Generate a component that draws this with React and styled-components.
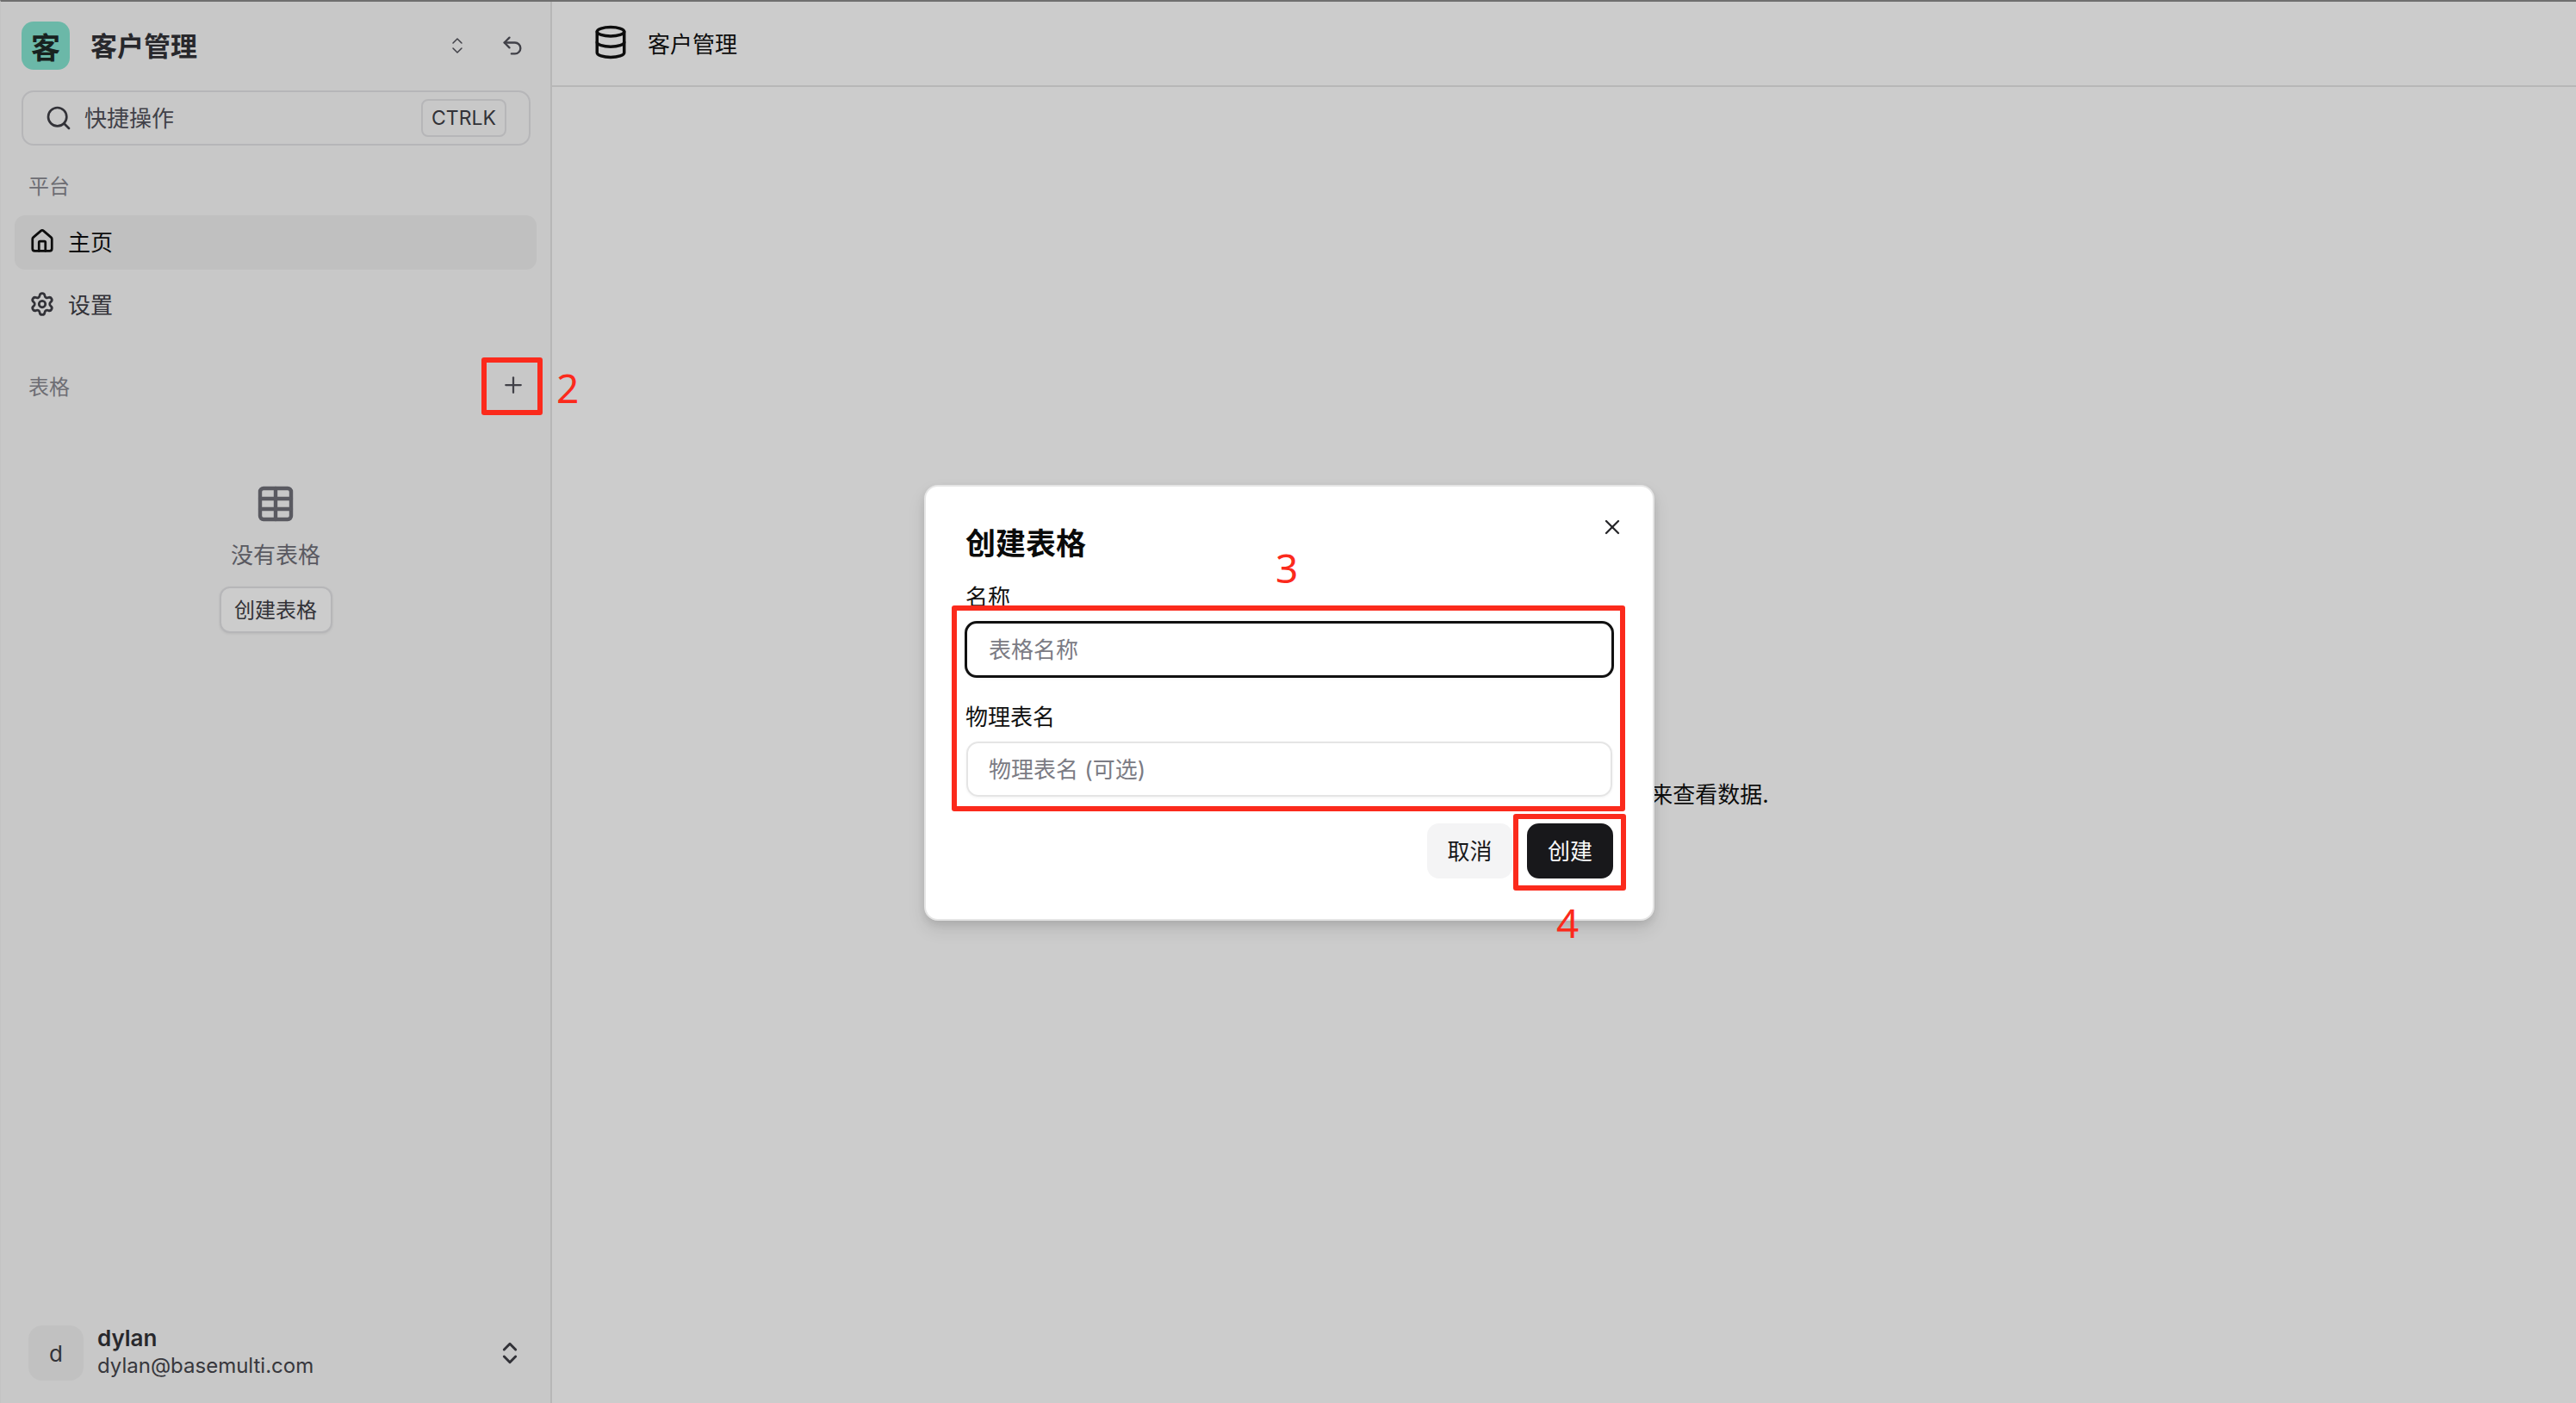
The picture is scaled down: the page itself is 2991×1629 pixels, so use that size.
import React from "react";
import styled, { createGlobalStyle } from "styled-components";
import {
  ChevronsUpDown,
  Database,
  House,
  Plus,
  Search,
  Settings,
  Table,
  Undo2,
  X,
} from "lucide-react";

const GlobalStyle = createGlobalStyle`
  html, body {
    margin: 0;
    padding: 0;
    height: 100%;
    overflow: hidden;
    background: #fff;
  }
  * {
    box-sizing: border-box;
  }
  body {
    font-family: Inter, "Noto Sans CJK SC", sans-serif;
    color: #0a0a0a;
  }
`;

const Page = styled.div`
  position: relative;
  display: flex;
  width: 2991px;
  height: 1629px;
  overflow: hidden;
  border-top: 2px solid #6f6f6f;
  border-left: 1px solid #c4c4c4;
`;

const Sidebar = styled.aside`
  display: flex;
  flex-direction: column;
  flex: 0 0 638px;
  height: 100%;
  background: #fafafa;
  border-right: 2px solid #e5e5e5;
`;

const BrandRow = styled.div`
  display: flex;
  align-items: center;
  height: 56px;
  margin: 23px 24px 0 24px;
`;

const BrandLogo = styled.div`
  display: flex;
  align-items: center;
  justify-content: center;
  width: 56px;
  height: 56px;
  border-radius: 14px;
  background: #86e6d2;
  color: #1f2b28;
  font-size: 34px;
  font-weight: 700;
`;

const BrandName = styled.div`
  flex: 1;
  margin-left: 24px;
  padding-bottom: 3px;
  font-size: 31px;
  font-weight: 700;
  color: #333338;
`;

const BrandActions = styled.div`
  display: flex;
  align-items: center;
  gap: 38px;
  color: #52525b;
  margin-right: 6px;
`;

const SearchBox = styled.div`
  display: flex;
  align-items: center;
  width: 591px;
  height: 64px;
  margin: 24px 0 0 24px;
  padding: 0 26px 0 25px;
  background: #fafafa;
  border: 2px solid #e4e4e7;
  border-radius: 14px;
  color: #3f3f46;
`;

const SearchLabel = styled.span`
  flex: 1;
  margin-left: 14px;
  padding-bottom: 3px;
  font-size: 26px;
  color: #52525b;
`;

const Kbd = styled.kbd`
  display: flex;
  align-items: center;
  justify-content: center;
  width: 99px;
  height: 44px;
  border: 2px solid #e4e4e7;
  border-radius: 8px;
  font-family: Inter, sans-serif;
  font-size: 23px;
  color: #3f3f46;
`;

const GroupRow = styled.div`
  display: flex;
  align-items: center;
  justify-content: space-between;
  height: ${(p) => p.$height}px;
  margin-top: ${(p) => p.$top}px;
  padding: 0 28px 0 32px;
  font-size: 24px;
  color: #8a8a92;
`;

const NavList = styled.nav`
  display: flex;
  flex-direction: column;
  gap: 10px;
  margin: 18px 16px 0;
`;

const NavItem = styled.div`
  display: flex;
  align-items: center;
  gap: 15px;
  height: 63px;
  padding: 0 0 4px 17px;
  border-radius: 12px;
  font-size: 26px;
  background: ${(p) => (p.$active ? "#f0f0f0" : "transparent")};
  color: ${(p) => (p.$active ? "#111" : "#3f3f46")};
`;

const EmptyTables = styled.div`
  display: flex;
  flex-direction: column;
  align-items: center;
  width: 638px;
  margin-top: 96px;
  color: #71717a;
`;

const EmptyText = styled.div`
  margin-top: 16px;
  font-size: 26px;
  line-height: 40px;
`;

const SmallButton = styled.div`
  display: flex;
  align-items: center;
  justify-content: center;
  width: 131px;
  height: 54px;
  margin-top: 16px;
  padding-bottom: 3px;
  border: 2px solid #e4e4e7;
  border-radius: 12px;
  background: #ffffff;
  box-shadow: 0 1px 3px rgba(0, 0, 0, 0.08);
  font-size: 24px;
  color: #3f3f46;
`;

const UserRow = styled.div`
  display: flex;
  align-items: center;
  margin: auto 31px 26px 32px;
  height: 64px;
`;

const Avatar = styled.div`
  display: flex;
  align-items: center;
  justify-content: center;
  width: 64px;
  height: 64px;
  border-radius: 16px;
  background: #f2f2f2;
  font-size: 26px;
  color: #3f3f46;
`;

const UserText = styled.div`
  flex: 1;
  margin-left: 16px;
  padding-bottom: 3px;
`;

const UserName = styled.div`
  font-size: 26px;
  line-height: 32px;
  font-weight: 600;
  color: #333338;
`;

const UserMail = styled.div`
  font-size: 24px;
  line-height: 32px;
  color: #46464d;
`;

const Main = styled.main`
  display: flex;
  flex-direction: column;
  flex: 1;
  background: #ffffff;
`;

const MainHeader = styled.header`
  display: flex;
  align-items: center;
  gap: 22px;
  height: 99px;
  padding: 0 0 3px 47px;
  border-bottom: 2px solid #e5e5e5;
  font-size: 26px;
  color: #111;
`;

const MainBody = styled.div`
  flex: 1;
  display: flex;
  align-items: center;
  justify-content: center;
  padding-top: 110px;
  font-size: 26px;
  color: #111;
`;

const Overlay = styled.div`
  position: absolute;
  inset: 0;
  display: flex;
  align-items: center;
  justify-content: center;
  padding-left: 2px;
  background: rgba(0, 0, 0, 0.2);
`;

const Modal = styled.div`
  position: relative;
  display: flex;
  flex-direction: column;
  width: 848px;
  height: 506px;
  padding: 44px 46px 0;
  background: #ffffff;
  border: 2px solid #e5e5e5;
  border-radius: 16px;
  box-shadow: 0 10px 20px rgba(0, 0, 0, 0.1), 0 4px 8px rgba(0, 0, 0, 0.08);
`;

const CloseButton = styled.button`
  position: absolute;
  top: 33px;
  right: 33px;
  display: flex;
  padding: 0;
  border: 0;
  background: none;
  color: #27272a;
`;

const ModalTitle = styled.h2`
  margin: 0;
  font-size: 35px;
  line-height: 44px;
  font-weight: 700;
  color: #0a0a0a;
`;

const FieldLabel = styled.label`
  display: block;
  font-size: 26px;
  line-height: 36px;
  margin-top: ${(p) => p.$top}px;
  color: #111;
`;

const FieldInput = styled.div`
  display: flex;
  align-items: center;
  height: ${(p) => (p.$focused ? 66 : 64)}px;
  margin: ${(p) => p.$top}px ${(p) => (p.$focused ? -1 : 1)}px 0;
  padding: 0 0 3px ${(p) => (p.$focused ? 25 : 24)}px;
  border: ${(p) => (p.$focused ? "3px solid #111" : "2px solid #e5e5e5")};
  border-radius: 14px;
  box-shadow: 0 1px 3px rgba(0, 0, 0, 0.06);
  font-size: 26px;
  color: #7b7b84;
`;

const ModalFooter = styled.div`
  display: flex;
  justify-content: flex-end;
  gap: 17px;
  margin-top: 31px;
`;

const ModalButton = styled.button`
  width: ${(p) => (p.$primary ? 100 : 99)}px;
  height: 64px;
  padding: 0 0 3px;
  border: 0;
  border-radius: 14px;
  font-family: inherit;
  font-size: 26px;
  background: ${(p) => (p.$primary ? "#18181b" : "#f4f4f5")};
  color: ${(p) => (p.$primary ? "#fafafa" : "#18181b")};
`;

// red marks drawn over the screenshot, their place on the picture is the content
const MarkBox = styled.div`
  position: absolute;
  left: ${(p) => p.$x}px;
  top: ${(p) => p.$y}px;
  width: ${(p) => p.$w}px;
  height: ${(p) => p.$h}px;
  border: 6px solid #fb2a1c;
  border-radius: 3px;
`;

const MarkNumber = styled.span`
  position: absolute;
  left: ${(p) => p.$x}px;
  top: ${(p) => p.$y}px;
  font-family: "Noto Sans", sans-serif;
  font-size: 46px;
  line-height: 46px;
  color: #fb2a1c;
`;

export default function App() {
  return (
    <>
      <GlobalStyle />
      <Page>
        <Sidebar>
          <BrandRow>
            <BrandLogo>客</BrandLogo>
            <BrandName>客户管理</BrandName>
            <BrandActions>
              <ChevronsUpDown size={24} strokeWidth={1.5} />
              <Undo2 size={28} strokeWidth={2} />
            </BrandActions>
          </BrandRow>
          <SearchBox>
            <Search size={32} strokeWidth={2} />
            <SearchLabel>快捷操作</SearchLabel>
            <Kbd>CTRLK</Kbd>
          </SearchBox>
          <GroupRow $height={36} $top={27}>
            平台
          </GroupRow>
          <NavList>
            <NavItem $active>
              <House size={30} strokeWidth={2.2} />
              主页
            </NavItem>
            <NavItem>
              <Settings size={30} strokeWidth={2.2} />
              设置
            </NavItem>
          </NavList>
          <GroupRow $height={36} $top={43}>
            表格
            <Plus size={30} strokeWidth={1.8} color="#52525b" />
          </GroupRow>
          <EmptyTables>
            <Table size={48} strokeWidth={2.2} color="#71717a" />
            <EmptyText>没有表格</EmptyText>
            <SmallButton>创建表格</SmallButton>
          </EmptyTables>
          <UserRow>
            <Avatar>d</Avatar>
            <UserText>
              <UserName>dylan</UserName>
              <UserMail>dylan@basemulti.com</UserMail>
            </UserText>
            <ChevronsUpDown size={32} strokeWidth={2.2} color="#3f3f46" />
          </UserRow>
        </Sidebar>
        <Main>
          <MainHeader>
            <Database size={42} strokeWidth={2} />
            客户管理
          </MainHeader>
          <MainBody>从侧边栏选择或创建一个表格来查看数据.</MainBody>
        </Main>
        <Overlay>
          <Modal>
            <CloseButton>
              <X size={28} strokeWidth={2} />
            </CloseButton>
            <ModalTitle>创建表格</ModalTitle>
            <FieldLabel $top={23}>名称</FieldLabel>
            <FieldInput $focused $top={9}>
              表格名称
            </FieldInput>
            <FieldLabel $top={28}>物理表名</FieldLabel>
            <FieldInput $top={10}>物理表名 (可选)</FieldInput>
            <ModalFooter>
              <ModalButton>取消</ModalButton>
              <ModalButton $primary>创建</ModalButton>
            </ModalFooter>
          </Modal>
        </Overlay>
        <MarkBox $x={558} $y={413} $w={71} $h={67} />
        <MarkNumber $x={645} $y={425}>
          2
        </MarkNumber>
        <MarkBox $x={1104} $y={701} $w={782} $h={239} />
        <MarkNumber $x={1480} $y={634}>
          3
        </MarkNumber>
        <MarkBox $x={1756} $y={943} $w={131} $h={89} />
        <MarkNumber $x={1806} $y={1046}>
          4
        </MarkNumber>
      </Page>
    </>
  );
}
